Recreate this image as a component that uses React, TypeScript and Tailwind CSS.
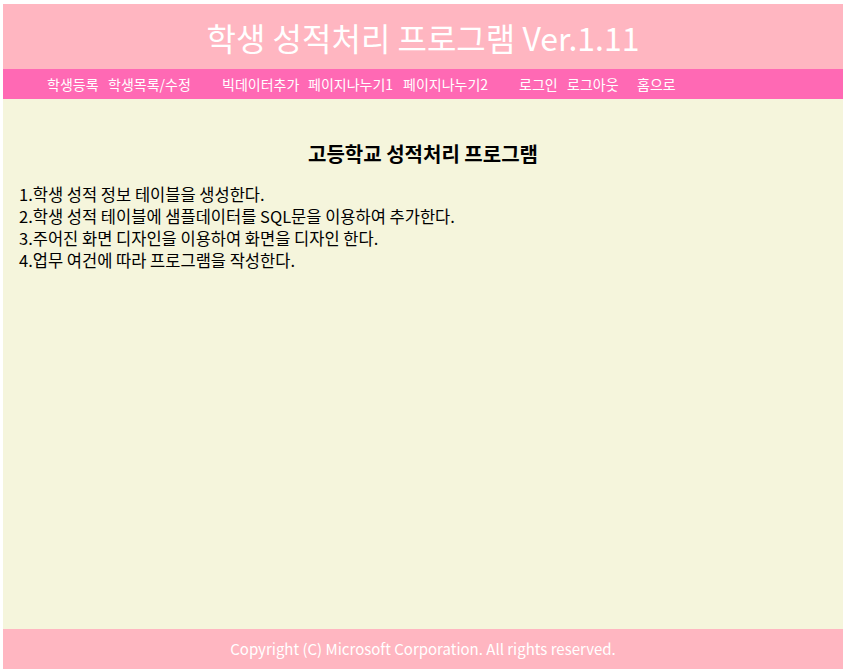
import React from 'react'

// fixed widths so each link lands where the original's &nbsp; spacing put it
const navItems = [
  { label: '학생등록', w: 'w-[61px]' },
  { label: '학생목록/수정', w: 'w-[114px]' },
  { label: '빅데이터추가', w: 'w-[86px]' },
  { label: '페이지나누기1', w: 'w-[95px]' },
  { label: '페이지나누기2', w: 'w-[116px]' },
  { label: '로그인', w: 'w-[48px]' },
  { label: '로그아웃', w: 'w-[70px]' },
  { label: '홈으로', w: 'w-auto' },
]

const rules = [
  '1.학생 성적 정보 테이블을 생성한다.',
  '2.학생 성적 테이블에 샘플데이터를 SQL문을 이용하여 추가한다.',
  '3.주어진 화면 디자인을 이용하여 화면을 디자인 한다.',
  '4.업무 여건에 따라 프로그램을 작성한다.',
]

export default function App() {
  return (
    <div className="w-[847px] h-[672px] bg-white pt-[4px] pl-[3px] pr-[4px] pb-[3px] font-['Noto_Sans_CJK_KR','Noto_Sans',sans-serif]">
      <div className="flex flex-col h-full">
        {/* Header */}
        <header className="h-[65px] bg-[#ffb6c1] flex items-center justify-center">
          <h1 className="text-[32px] leading-none text-white">학생 성적처리 프로그램 Ver.1.11</h1>
        </header>

        {/* Nav */}
        <nav className="h-[30px] bg-[#ff69b4] flex items-center pl-[44px] text-[14px] text-white">
          {navItems.map((item) => (
            <span key={item.label} className={`${item.w} shrink-0 whitespace-nowrap`}>{item.label}</span>
          ))}
        </nav>

        {/* Content */}
        <section className="flex-1 bg-[#f5f5dc] px-[16px] pt-[40px] text-black">
          <h2 className="text-center text-[20px] font-bold leading-[30px]">고등학교 성적처리 프로그램</h2>
          <div className="mt-[14px] text-[16.5px] leading-[22px]">
            {rules.map((r) => (
              <p key={r}>{r}</p>
            ))}
          </div>
        </section>

        {/* Footer */}
        <footer className="h-[40px] bg-[#ffb6c1] flex items-center justify-center text-white text-[15px]">
          Copyright (C) Microsoft Corporation. All rights reserved.
        </footer>
      </div>
    </div>
  )
}
